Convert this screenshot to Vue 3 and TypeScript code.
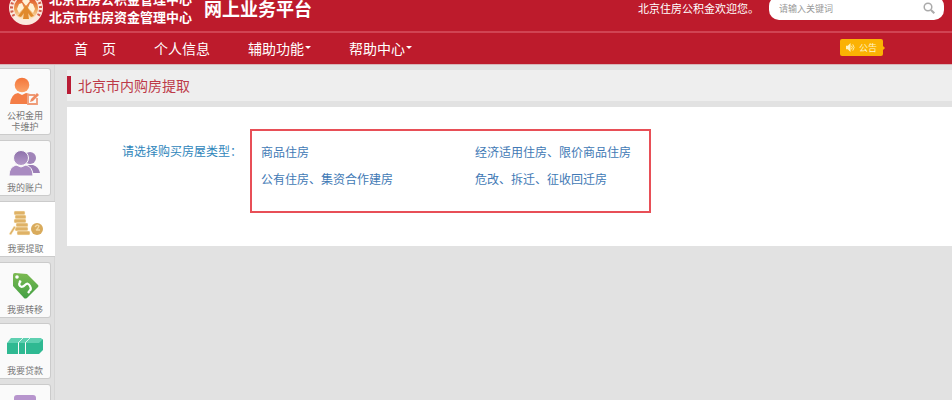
<script setup lang="ts">
import { ref } from 'vue'

interface MenuItem {
  label: string
  dropdown: boolean
}
interface SideItem {
  label: string
  icon: 'edit' | 'users' | 'coins' | 'tag' | 'loan' | 'more'
}

const menu: MenuItem[] = [
  { label: '首　页', dropdown: false },
  { label: '个人信息', dropdown: false },
  { label: '辅助功能', dropdown: true },
  { label: '帮助中心', dropdown: true },
]

const sideItems: SideItem[] = [
  { label: '公积金用卡维护', icon: 'edit' },
  { label: '我的账户', icon: 'users' },
  { label: '我要提取', icon: 'coins' },
  { label: '我要转移', icon: 'tag' },
  { label: '我要贷款', icon: 'loan' },
  { label: '', icon: 'more' },
]

const houseTypes: string[] = [
  '商品住房',
  '经济适用住房、限价商品住房',
  '公有住房、集资合作建房',
  '危改、拆迁、征收回迁房',
]

const active = ref<SideItem['icon']>('coins')
const keyword = ref('')
</script>

<template>
  <div class="page">
    <header class="banner">
      <svg class="logo" viewBox="0 0 36 36" aria-hidden="true">
        <defs>
          <linearGradient id="gold" x2="0" y2="1">
            <stop offset="0" stop-color="#dc4526" />
            <stop offset=".55" stop-color="#eda052" />
            <stop offset="1" stop-color="#fff0d0" />
          </linearGradient>
        </defs>
        <circle cx="18" cy="18" r="17" fill="#fbe9de" />
        <path d="M6 26A14.500 14.500 0 1 1 30 26" fill="none" stroke="#d4604c" stroke-width="3" stroke-dasharray="2 2" />
        <circle cx="18" cy="18" r="12" fill="url(#gold)" />
        <path d="M18 7l4 4-4 5-4-5zM11 14l3-1 2 5-5 5-2-4zM25 14l-3-1-2 5 5 5 2-4z" fill="#fff2d6" />
        <path d="M18 15l3 5 5 6-3 1-3-4 1 6h-6l1-6-3 4-3-1 5-6z" fill="#e08a2c" />
      </svg>
      <div class="org">
        <span>北京住房公积金管理中心</span>
        <span>北京市住房资金管理中心</span>
      </div>
      <h1 class="platform">网上业务平台</h1>
      <p class="welcome">北京住房公积金欢迎您。</p>
      <form class="search" @submit.prevent>
        <input v-model="keyword" type="text" placeholder="请输入关键词" aria-label="请输入关键词" />
        <button type="submit" aria-label="搜索">
          <svg viewBox="0 0 12 12"><circle cx="5" cy="5" r="3.8" fill="none" stroke="#aaa" stroke-width="1.5" /><path d="M8 8l3.3 3.3" stroke="#aaa" stroke-width="2" /></svg>
        </button>
      </form>
    </header>

    <nav class="menu">
      <a v-for="m in menu" :key="m.label" href="#">{{ m.label }}<i v-if="m.dropdown" class="caret"></i></a>
      <button class="notice" type="button">
        <svg viewBox="0 0 10 10"><path d="M0 3h2l3-3v10l-3-3H0z" fill="#fff3c0" /><path d="M6 3q2 2 0 4M7.500 1.500q3 3.500 0 7" fill="none" stroke="#fff3c0" /></svg>
        公告
      </button>
    </nav>

    <div class="body">
      <aside class="side">
        <a v-for="s in sideItems" :key="s.icon" href="#" class="card" :class="{ active: s.icon === active }" @click.prevent="active = s.icon">
          <svg v-if="s.icon === 'edit'" viewBox="0 0 36 30">
            <defs><linearGradient id="orange" x2="0" y2="1"><stop stop-color="#f3753a" /><stop offset="1" stop-color="#fba268" /></linearGradient></defs>
            <circle cx="15" cy="8" r="7.300" fill="url(#orange)" />
            <path d="M3 27q1-10 8-11l4 2 4-2 4 1-3 2v8z" fill="#f47d46" />
            <path d="M28 18h-7v9h9v-6" fill="none" stroke="#ef9c78" stroke-width="1.800" />
            <path d="M23 25l1-3 6-6 2 2-6 6z" fill="#ef8a60" />
          </svg>
          <svg v-else-if="s.icon === 'users'" viewBox="0 0 36 30">
            <defs><linearGradient id="violet" x2="0" y2="1"><stop stop-color="#8d70aa" /><stop offset="1" stop-color="#b59aca" /></linearGradient></defs>
            <circle cx="23" cy="9" r="6" fill="#a084b8" />
            <path d="M20 16h6q6 2 7 8H20z" fill="#9b7db5" />
            <circle cx="14" cy="9" r="7.500" fill="url(#violet)" stroke="#fafafa" />
            <path d="M2 27q0-9 7-11l5 2 5-2q7 2 7 11z" fill="#a98bc1" stroke="#fafafa" />
          </svg>
          <svg v-else-if="s.icon === 'coins'" viewBox="0 0 36 30">
            <g fill="#dfb266" stroke="#fff6e0" stroke-width=".5">
              <rect x="6" y="1" width="11" height="4" rx="1" /><rect x="7" y="5" width="11" height="4" rx="1" /><rect x="6" y="9" width="12" height="4" rx="1" />
              <rect x="8" y="13" width="12" height="4" rx="1" /><rect x="7" y="17" width="13" height="4" rx="1" /><rect x="9" y="21" width="13" height="4" rx="1" />
              <path d="M1 24l5-8 2 1-5 8z" />
            </g>
            <circle cx="29" cy="19" r="6" fill="#d9ab5c" />
            <path d="M27 17q2-3 4-1-1 3-3 4h4" fill="none" stroke="#f3d9a3" stroke-width="1.300" />
          </svg>
          <svg v-else-if="s.icon === 'tag'" viewBox="0 0 36 30">
            <defs><linearGradient id="green" x2="0" y2="1"><stop stop-color="#7cba51" /><stop offset="1" stop-color="#43a044" /></linearGradient></defs>
            <path d="M6 4q0-2 2-2l12 1 11 11q1 1 0 2L20 27q-2 1-3 0L6 15z" fill="url(#green)" />
            <circle cx="10" cy="6" r="1.800" fill="#fff" />
            <path d="M14 10q-3 3-1 5t5-1 5 1-1 5M12 10l2 1M24 18l-3 4" fill="none" stroke="#fff" stroke-width="2.200" />
          </svg>
          <svg v-else-if="s.icon === 'loan'" viewBox="0 0 36 30">
            <path d="M4 6h30l2 2-3 3H0z" fill="#5fd0b1" />
            <path d="M0 11h11v11H0zM12 11h6v11h-6zM19 11h13v11H19zM32 11l4-4v11l-4 4z" fill="#2fb992" />
            <path d="M11 11l5-5M18 11l5-5" stroke="#d8f4ec" />
          </svg>
          <svg v-else viewBox="0 0 36 30"><rect x="7" y="2" width="22" height="24" rx="3" fill="#b795cd" /></svg>
          <span v-if="s.label">{{ s.label }}</span>
        </a>
      </aside>

      <main class="content">
        <h2 class="title">北京市内购房提取</h2>
        <section class="panel">
          <span id="type-label" class="label">请选择购买房屋类型：</span>
          <div class="types" role="group" aria-labelledby="type-label">
            <a v-for="t in houseTypes" :key="t" href="#">{{ t }}</a>
          </div>
        </section>
      </main>
    </div>
  </div>
</template>

<style>
body {
  margin: 0;
  background: #e2e2e2;
}
</style>

<style scoped>
* {
  box-sizing: border-box;
}
.page {
  height: 100vh;
  overflow: hidden;
  display: flex;
  flex-direction: column;
  font-family: "Noto Sans CJK SC", sans-serif;
  background: #e2e2e2;
}
a {
  text-decoration: none;
}
button {
  border: 0;
  padding: 0;
  font-family: inherit;
}
.banner {
  flex: none;
  height: 31px;
  padding: 0 8px;
  display: flex;
  align-items: flex-end;
  overflow: hidden;
  background: #bd1b2c;
  color: #fff;
}
.logo {
  flex: none;
  width: 36px;
  height: 36px;
  margin-bottom: 5px;
}
.org {
  display: flex;
  flex-direction: column;
  margin: 0 12px 5px 5px;
  font-size: 13px;
  line-height: 18px;
  font-weight: 700;
  white-space: nowrap;
}
.platform {
  margin: 0 auto 9px 0;
  font-size: 18px;
  line-height: 28px;
  font-weight: 700;
  white-space: nowrap;
}
.welcome {
  margin: 0 10px 15px 0;
  font-size: 11px;
  line-height: 16px;
  white-space: nowrap;
}
.search {
  width: 175px;
  height: 24px;
  margin-bottom: 11px;
  padding: 0 9px 0 10px;
  display: flex;
  align-items: center;
  border-radius: 10px;
  background: #fff;
}
.search input {
  flex: 1;
  min-width: 0;
  border: 0;
  outline: 0;
  padding: 0;
  background: none;
  font-family: inherit;
  font-size: 9px;
  color: #666;
}
.search input::placeholder {
  color: #999;
}
.search button {
  width: 12px;
  height: 12px;
  background: none;
}
.search svg {
  display: block;
}
.menu {
  flex: none;
  height: 33px;
  padding: 0 69px 2px 74px;
  display: flex;
  align-items: center;
  gap: 38px;
  border-top: 2px solid #d04453;
  background: #bd1b2c;
}
.menu a {
  display: flex;
  align-items: center;
  font-size: 14px;
  line-height: 20px;
  color: #fff;
}
.caret {
  margin-left: 1px;
  border: 3px solid transparent;
  border-top-color: #fff;
  border-bottom: 0;
}
.notice {
  position: relative;
  width: 43px;
  height: 17px;
  margin-left: auto;
  display: flex;
  align-items: center;
  justify-content: center;
  gap: 4px;
  border-radius: 2px;
  background: #fbb203;
  color: #fff3c0;
  font-size: 9px;
}
.notice svg {
  width: 9px;
  height: 9px;
}
.notice::after {
  content: "";
  position: absolute;
  left: 100%;
  top: 7px;
  border: 2px solid transparent;
  border-left-color: #fbb203;
}
.body {
  flex: 1;
  min-height: 0;
  display: flex;
  border-top: 1px solid #d8b4b8;
}
.side {
  flex: none;
  width: 55px;
  padding-top: 3px;
  display: flex;
  flex-direction: column;
  gap: 5px;
  border-right: 1px solid #d6d6d6;
  background: #e0e0e0;
}
.card {
  flex: none;
  width: 51px;
  min-height: 56px;
  padding: 8px 4px 2px;
  display: flex;
  flex-direction: column;
  align-items: center;
  border: 1px solid #cbcbcb;
  border-left: 0;
  border-radius: 0 3px 3px 0;
  background: #fafafa;
  color: #777;
  font-size: 9px;
  line-height: 11px;
  text-align: center;
}
.card.active {
  width: 55px;
  padding-right: 8px;
  border-right: 0;
  border-radius: 0;
  background: #fff;
}
.card svg {
  flex: none;
  width: 36px;
  height: 30px;
  margin-bottom: 3px;
}
.card span {
  width: 38px;
}
.content {
  flex: 1;
  min-width: 0;
  padding: 5px 0 0 12px;
}
.title {
  height: 31px;
  margin: 0 0 6px;
  padding-bottom: 2px;
  display: flex;
  align-items: center;
  background: #eee;
  color: #bd3a48;
  font-size: 14px;
  line-height: 20px;
  font-weight: 400;
}
.title::before {
  content: "";
  width: 4px;
  height: 18px;
  margin-right: 7px;
  background: #b91c35;
}
.panel {
  min-height: 139px;
  padding: 22px 16px 32px 55px;
  display: flex;
  align-items: flex-start;
  gap: 8px;
  background: #fff;
  font-size: 12px;
}
.label {
  padding-top: 12px;
  line-height: 20px;
  color: #2f86bb;
}
.types {
  min-height: 84px;
  padding: 7px 18px 18px 9px;
  display: grid;
  grid-template-columns: 214px auto;
  align-content: start;
  border: 2px solid #e84f57;
}
.types a {
  line-height: 27px;
  color: #4179b5;
}
</style>
